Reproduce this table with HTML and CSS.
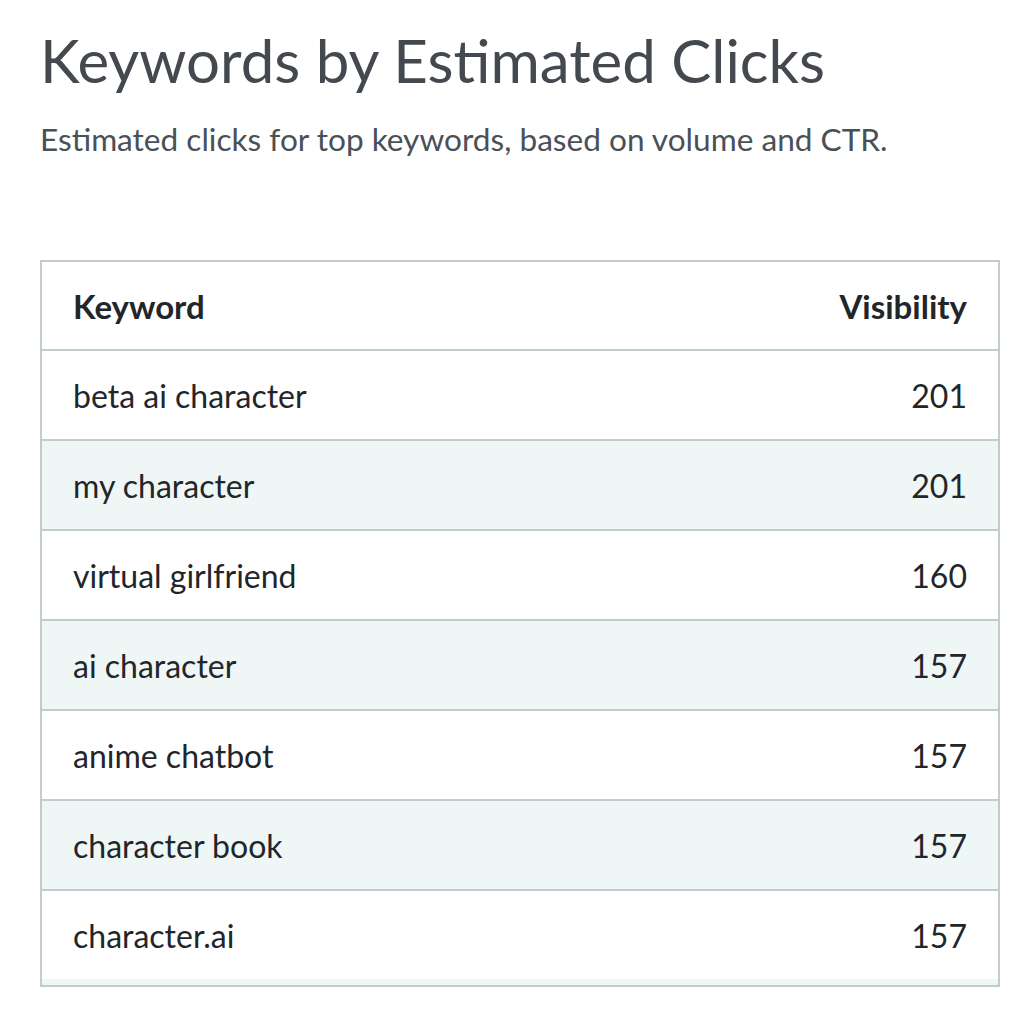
FILE: index.html
```html
<!DOCTYPE html>
<html>
<head>
<meta charset="utf-8">
<link rel="stylesheet" href="styles.css">
</head>
<body>
<main class="page">
  <h1 class="title">Keywords by Estimated Clicks</h1>
  <p class="subtitle">Estimated clicks for top keywords, based on volume and CTR.</p>
  <div class="table-wrap">
    <table class="kw-table">
      <thead>
        <tr><th class="kw">Keyword</th><th class="num">Visibility</th></tr>
      </thead>
      <tbody>
        <tr><td class="kw">beta ai character</td><td class="num">201</td></tr>
        <tr class="alt"><td class="kw">my character</td><td class="num">201</td></tr>
        <tr><td class="kw">virtual girlfriend</td><td class="num">160</td></tr>
        <tr class="alt"><td class="kw">ai character</td><td class="num">157</td></tr>
        <tr><td class="kw">anime chatbot</td><td class="num">157</td></tr>
        <tr class="alt"><td class="kw">character book</td><td class="num">157</td></tr>
        <tr><td class="kw">character.ai</td><td class="num">157</td></tr>
      </tbody>
    </table>
  </div>
</main>
</body>
</html>
```

FILE: styles.css
```css
html, body {
  margin: 0;
  padding: 0;
  background: #ffffff;
}
body {
  font-family: Lato, "Open Sans", sans-serif;
}
.page {
  padding: 18px 22px 0 40px;
}
.title {
  margin: 0;
  font-size: 60px;
  font-weight: 400;
  line-height: 84px;
  color: #43494e;
}
.subtitle {
  margin: 17px 0 0 0;
  font-size: 31.6px;
  line-height: 40px;
  color: #4a5156;
}
.table-wrap {
  margin-top: 101px;
  border: 2px solid #c1cccc;
  background: #eef6f6;
  padding-bottom: 6px;
  width: 956px;
}
.kw-table {
  width: 100%;
  border-collapse: separate;
  border-spacing: 0;
  font-size: 32px;
  color: #22262a;
}
.kw-table th,
.kw-table td {
  box-sizing: content-box;
  height: 88px;
  padding: 0 31px;
  vertical-align: middle;
  background: #ffffff;
}
.kw-table th {
  height: 87px;
  font-weight: 700;
  font-size: 33px;
  border-bottom: 2px solid #c1cccc;
}
.kw-table tbody tr + tr td {
  border-top: 2px solid #c1cccc;
}
.kw-table tr.alt td {
  background: #eef6f6;
}
.kw { text-align: left; }
.num { text-align: right; }
```
